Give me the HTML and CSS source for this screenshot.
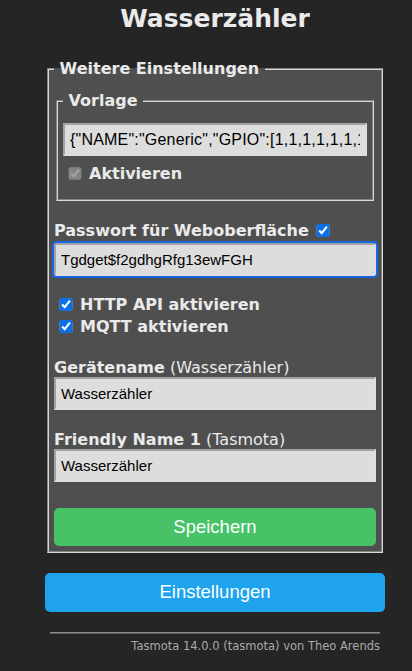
FILE: index.html
```html
<!DOCTYPE html>
<html lang="de">
<head>
    <meta charset="UTF-8">
    <title>Wasserzähler - Weitere Einstellungen</title>
    <link rel="stylesheet" href="styles.css">
</head>
<body>
    <div class="main">
        <h2 class="title">Wasserzähler</h2>
        <fieldset class="box">
            <legend><b>&nbsp;Weitere Einstellungen&nbsp;</b></legend>
            <fieldset class="box inner">
                <legend><b>&nbsp;Vorlage&nbsp;</b></legend>
                <div class="row first">
                    <input class="field tpl" value='{"NAME":"Generic","GPIO":[1,1,1,1,1,1,1,1,1,1,1,1,1,1],"FLAG":0,"BASE":18}'>
                </div>
                <div class="row check">
                    <label><input type="checkbox" checked disabled><b>Aktivieren</b></label>
                </div>
            </fieldset>

            <div class="label pw">
                <label><b>Passwort für Weboberfläche</b><input type="checkbox" class="after" checked></label>
            </div>
            <input class="field focus" value="Tgdget$f2gdhgRfg13ewFGH">

            <!--api und mqtt-->
            <div class="checks">
                <div class="check"><label><input type="checkbox" checked><b>HTTP API aktivieren</b></label></div>
                <div class="check"><label><input type="checkbox" checked><b>MQTT aktivieren</b></label></div>
            </div>

            <div class="label"><b>Gerätename</b> (Wasserzähler)</div>
            <input class="field" value="Wasserzähler">

            <div class="label"><b>Friendly Name 1</b> (Tasmota)</div>
            <input class="field" value="Wasserzähler">

            <button class="btn green">Speichern</button>
        </fieldset>

        <button class="btn blue">Einstellungen</button>

        <hr class="line">
        <div class="footer">Tasmota 14.0.0 (tasmota) von Theo Arends</div>
    </div>
</body>
</html>
```

FILE: styles.css
```css
*{
    box-sizing: border-box;
}
body{
    margin: 0;
    background-color: #252525;
    color: #eaeaea;
    font-family: "DejaVu Sans", Verdana, sans-serif;
    font-size: 16px;
}
.main{
    width: 340px;
    margin: 0 27px 0 45px;
}
.title{
    margin: 4px 0 25px;
    font-size: 25px;
    line-height: 30px;
    text-align: center;
}
.box{
    margin: 0 2px;
    padding: 5px;
    border: 2px groove #d8d8d8;
    background-color: #4f4f4f;
}
.box legend{
    padding: 0;
    line-height: 19px;
}
.inner{
    margin-top: 8px;
}
.row.first{
    margin-top: 8px;
}
.row.check{
    margin: 8px 0 10px;
    line-height: 20px;
}
.field{
    display: block;
    width: 100%;
    height: 33px;
    padding: 5px;
    border: 2px solid;
    border-color: #a2a2a2 #dedede #dedede #a2a2a2;
    background-color: #dddddd;
    color: #000;
    font-family: "Liberation Sans", Arial, sans-serif;
    font-size: 15px;
}
/* anfuehrungszeichen sind im original breiter */
.field.tpl{
    font-size: 16px;
    letter-spacing: 0.2px;
}
.field.focus{
    margin-top: 3px;
    border-radius: 2px;
    outline: 2px solid #1766e3;
}
input[type=checkbox]{
    width: 16px;
    margin: 0 6px 0 4px;
    vertical-align: -1px;
    accent-color: #0b6fe8;
}
input[type=checkbox]:disabled{
    opacity: 0.6;
}
input.after{
    margin-left: 6px;
}
.label{
    margin-top: 20px;
    line-height: 19px;
}
.label.pw{
    margin-top: 20px;
}
.checks{
    margin-top: 18px;
}
.check{
    line-height: 22px;
}
.btn{
    display: block;
    width: 100%;
    border: none;
    border-radius: 5px;
    color: #faffff;
    font-family: "Liberation Sans", Arial, sans-serif;
    font-size: 18.5px;
    line-height: 38.4px;
    padding: 0;
    cursor: pointer;
}
.green{
    margin-top: 26px;
    background-color: #47c266;
}
.blue{
    margin-top: 20px;
    background-color: #1fa3ec;
}
.blue:hover{
    background-color: #0e70a4;
}
.line{
    margin: 20px 5px 0;
    height: 2px;
    border: none;
    border-top: 1px solid #8a8a8a;
    border-bottom: 1px solid #5a5a5a;
}
.footer{
    margin-top: 5px;
    padding: 0 5px;
    text-align: right;
    font-size: 11.5px;
    color: #aaa;
}
```
